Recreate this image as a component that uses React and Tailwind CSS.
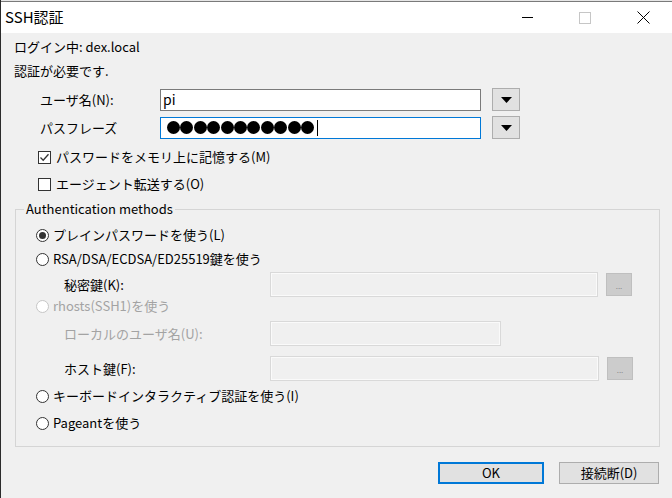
import React from "react";

const font = { fontFamily: '"Noto Sans CJK JP", "Noto Sans", sans-serif' };

const DropButton = () => (
  <div className="w-[28px] h-[23px] bg-[#e1e1e1] border border-[#adadad] flex items-center justify-center">
    <svg width="11" height="6" viewBox="0 0 11 6">
      <path d="M0 0 H11 L5.5 6 Z" fill="#000" />
    </svg>
  </div>
);

const Checkbox = ({ checked, label }) => (
  <div className="flex items-center h-[18px] pl-[24px]">
    <div className="w-[13px] h-[13px] border border-[#333] bg-white flex items-center justify-center">
      {checked && (
        <svg width="11" height="11" viewBox="0 0 11 11">
          <path d="M1.5 5.5 L4.2 8.2 L9.5 2.2" stroke="#333" strokeWidth="1.3" fill="none" />
        </svg>
      )}
    </div>
    <span className="ml-[5px] text-[13px] text-black">{label}</span>
  </div>
);

const Radio = ({ checked, disabled, label, className = "" }) => (
  <div className={`flex items-center h-[18px] pl-[20px] ${className}`}>
    <div
      className={`w-[13px] h-[13px] rounded-full border bg-white flex items-center justify-center ${
        disabled ? "border-[#c6c6c6]" : "border-[#333]"
      }`}
    >
      {checked && <div className="w-[7px] h-[7px] rounded-full bg-[#333]" />}
    </div>
    <span className={`ml-[4px] text-[13px] ${disabled ? "text-[#a3a3a3]" : "text-black"}`}>{label}</span>
  </div>
);

const DisabledInput = ({ w }) => (
  <div className={`${w} h-[25px] border border-[#d9d9d9] bg-[#f0f0f0] shadow-[inset_0_0_0_1px_#fafafa]`} />
);

const DotsButton = () => (
  <div className="ml-[8px] w-[26px] h-[23px] bg-[#cccccc] border border-[#bfbfbf] flex items-end justify-center pb-[5px]">
    <span className="text-[8px] leading-none text-[#8a8a8a]">...</span>
  </div>
);

export default function App() {
  return (
    <div className="w-[672px] h-[498px] overflow-hidden bg-[#f0f0f0] border-l border-[#2b2b2b]" style={font}>
      <div className="h-[1px] bg-[#e6e6e6]" />
      <div className="h-[1px] bg-[#7a7a7a]" />
      <div className="h-[31px] bg-white flex items-center">
        <span className="pl-[4px] text-[15px] text-black">SSH認証</span>
        <div className="ml-auto flex h-full">
          <div className="w-[58px] flex items-center justify-center">
            <div className="w-[11px] h-[1px] bg-black" />
          </div>
          <div className="w-[58px] flex items-center justify-center">
            <div className="w-[12px] h-[12px] border border-[#c6c6c6]" />
          </div>
          <div className="w-[58px] flex items-center justify-center">
            <svg width="13" height="13" viewBox="0 0 13 13">
              <path d="M0.5 0.5 L12.5 12.5 M12.5 0.5 L0.5 12.5" stroke="#000" strokeWidth="1" />
            </svg>
          </div>
        </div>
      </div>

      <div className="pl-[13px] flex flex-col text-[13px] text-black">
        <div className="mt-[5px] h-[18px] flex items-center">ログイン中: dex.local</div>
        <div className="mt-[6px] h-[18px] flex items-center">認証が必要です.</div>

        <div className="mt-[8px] h-[23px] flex items-center">
          <span className="pl-[26px] w-[146px]">ユーザ名(N):</span>
          <div className="w-[321px] h-[22px] border border-[#7a7a7a] bg-white flex items-center pl-[2px] text-[14px]">
            pi
          </div>
          <div className="ml-[11px]">
            <DropButton />
          </div>
        </div>

        <div className="mt-[5px] h-[23px] flex items-center">
          <span className="pl-[26px] w-[146px]">パスフレーズ</span>
          <div className="w-[321px] h-[22px] border border-[#0078d7] bg-white flex items-center pl-[6px]">
            <div className="flex gap-[0.4px]">
              {Array.from({ length: 11 }).map((_, i) => (
                <div key={i} className="w-[13px] h-[13px] rounded-full bg-black" />
              ))}
            </div>
            <div className="ml-[3px] w-[1px] h-[16px] bg-black" />
          </div>
          <div className="ml-[11px]">
            <DropButton />
          </div>
        </div>

        <div className="mt-[9px]">
          <Checkbox checked label="パスワードをメモリ上に記憶する(M)" />
        </div>
        <div className="mt-[9px]">
          <Checkbox label="エージェント転送する(O)" />
        </div>

        <fieldset className="mt-[7px] ml-[1px] w-[645px] border border-[#d5d5d5] pb-[14px]">
          <legend className="ml-[8px] px-[2px] h-[18px] leading-[18px] text-[13px]">Authentication methods</legend>

          <Radio checked label="プレインパスワードを使う(L)" className="mt-[8px]" />
          <Radio label="RSA/DSA/ECDSA/ED25519鍵を使う" className="mt-[6px]" />

          <div className="mt-[4px] h-[25px] flex items-center">
            <span className="pl-[48px] w-[254px]">秘密鍵(K):</span>
            <DisabledInput w="w-[328px]" />
            <DotsButton />
          </div>

          <Radio disabled label="rhosts(SSH1)を使う" />

          <div className="mt-[6px] h-[25px] flex items-center">
            <span className="pl-[48px] w-[254px] text-[#a3a3a3]">ローカルのユーザ名(U):</span>
            <DisabledInput w="w-[231px]" />
          </div>

          <div className="mt-[10px] h-[25px] flex items-center">
            <span className="pl-[48px] w-[254px]">ホスト鍵(F):</span>
            <DisabledInput w="w-[329px]" />
            <DotsButton />
          </div>

          <Radio label="キーボードインタラクティブ認証を使う(I)" className="mt-[6px]" />
          <Radio label="Pageantを使う" className="mt-[9px]" />
        </fieldset>

        <div className="mt-[15px] flex justify-end pr-[13px] gap-[15px]">
          <div className="w-[106px] h-[22px] border-2 border-[#0078d7] bg-[#e1e1e1] flex items-center justify-center text-[13px]">
            OK
          </div>
          <div className="w-[100px] h-[22px] border border-[#adadad] bg-[#e1e1e1] flex items-center justify-center text-[13px]">
            接続断(D)
          </div>
        </div>
      </div>
    </div>
  );
}
